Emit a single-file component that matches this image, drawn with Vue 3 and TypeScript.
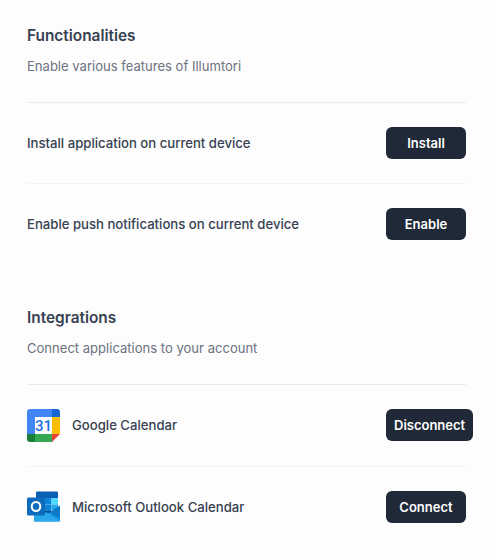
<script setup lang="ts">
interface Row {
  label: string
  action: string
  icon?: 'google' | 'outlook'
}
interface Section {
  title: string
  subtitle: string
  rows: Row[]
}
const sections: Section[] = [
  {
    title: 'Functionalities',
    subtitle: 'Enable various features of Illumtori',
    rows: [
      { label: 'Install application on current device', action: 'Install' },
      { label: 'Enable push notifications on current device', action: 'Enable' },
    ],
  },
  {
    title: 'Integrations',
    subtitle: 'Connect applications to your account',
    rows: [
      { label: 'Google Calendar', action: 'Disconnect', icon: 'google' },
      { label: 'Microsoft Outlook Calendar', action: 'Connect', icon: 'outlook' },
    ],
  },
]
</script>

<template>
  <main class="page">
    <section v-for="s in sections" :key="s.title" class="section">
      <header class="head">
        <h2 class="title">{{ s.title }}</h2>
        <p class="subtitle">{{ s.subtitle }}</p>
      </header>
      <div v-for="r in s.rows" :key="r.label" class="row">
        <div class="left">
          <svg v-if="r.icon === 'google'" class="icon" viewBox="0 0 33 33" aria-hidden="true">
            <path d="M8 8h17v17H8z" fill="#fff" />
            <path d="M25 0H3a3 3 0 0 0-3 3v22h8V8h17z" fill="#4285f4" />
            <path d="M25 0v8h8V3a3 3 0 0 0-3-3z" fill="#1967d2" />
            <path d="M25 8h8v17h-8z" fill="#fbbc04" />
            <path d="M8 25h17v8H8z" fill="#34a853" />
            <path d="M0 25v5a3 3 0 0 0 3 3h5v-8z" fill="#188038" />
            <path d="M25 25v8l8-8z" fill="#ea4335" />
            <text x="16.500" y="21.500" text-anchor="middle" class="date">31</text>
          </svg>
          <svg v-else-if="r.icon === 'outlook'" class="icon" viewBox="0 0 33 33" aria-hidden="true">
            <path d="M9 2.500a1 1 0 0 1 1-1h20a1 1 0 0 1 1 1V8H9z" fill="#0a5fb4" />
            <path d="M9 8h8v6.500H9z" fill="#0364b8" />
            <path d="M17 8h7.500v6.500H17z" fill="#0f85d9" />
            <path d="M24.500 8H31v6.500h-6.500z" fill="#50d9ff" />
            <path d="M9 14.500h8V21H9z" fill="#0364b8" />
            <path d="M17 14.500h7.500V21H17z" fill="#0f85d9" />
            <path d="M24.500 14.500H31V20h-6.500z" fill="#28a8ea" />
            <path d="M9 21h15.500v6H9z" fill="#064a8c" />
            <path d="M33 15.500 21 23.500 7 17v13.500a1 1 0 0 0 1 1h24a1 1 0 0 0 1-1z" fill="#1490df" />
            <path d="M33 15.500 23 22.200l10 6.300z" fill="#0f78c8" />
            <path d="M7 31.500h25a1 1 0 0 0 1-1L20 22.500 7 25z" fill="#28a8ea" />
            <rect x="0" y="7.500" width="18" height="18" rx="1.500" fill="#0f6cbd" />
            <ellipse cx="9" cy="16.500" rx="4.300" ry="4.600" fill="none" stroke="#fff" stroke-width="2" />
          </svg>
          <span class="label">{{ r.label }}</span>
        </div>
        <div class="action">
          <button type="button" class="btn">{{ r.action }}</button>
        </div>
      </div>
    </section>
  </main>
</template>

<style>
html, body { margin: 0; background: #fdfdfe; }
</style>

<style scoped>
.page {
  box-sizing: border-box;
  width: 494px;
  height: 553px;
  overflow: hidden;
  padding: 26px 27px 0;
  font-family: Inter, sans-serif;
  display: flex;
  flex-direction: column;
  gap: 43.95px;
}
.head { padding-bottom: 26px; }
.title {
  margin: 0;
  font-size: 15.4px;
  line-height: 20px;
  font-weight: 600;
  color: #374151;
}
.subtitle {
  margin: 10px 0 0;
  font-size: 13.05px;
  line-height: 20px;
  color: #6b7280;
}
.row {
  width: 439px;
  height: 81.2px;
  box-sizing: border-box;
  border-top: 1px solid #e8eaed;
  display: flex;
  align-items: center;
  justify-content: space-between;
}
.row + .row { border-top-color: #f3f4f6; }
.left { display: flex; align-items: center; gap: 12px; }
.icon { width: 33px; height: 33px; display: block; }
.date {
  font-family: Roboto, sans-serif;
  font-size: 15px;
  font-weight: 500;
  fill: #1a73e8;
}
.label {
  font-size: 13.15px;
  line-height: 20px;
  font-weight: 500;
  color: #374151;
}
.action { width: 80px; flex: none; }
.btn {
  display: block;
  min-width: 100%;
  height: 32px;
  padding: 0 8px;
  border: 0;
  border-radius: 6px;
  background: #1f2937;
  color: #fff;
  font-family: inherit;
  font-size: 13px;
  font-weight: 600;
  white-space: nowrap;
}
</style>
